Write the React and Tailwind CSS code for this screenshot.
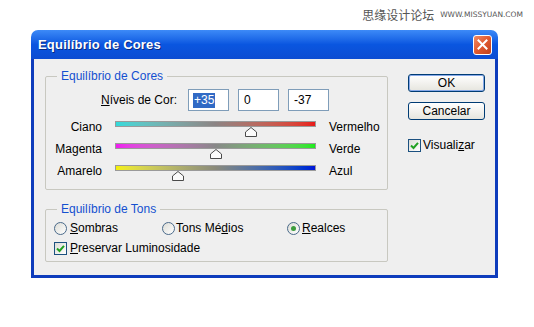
import React from 'react';

const font = { fontFamily: '"Liberation Sans", Arial, sans-serif' };

const sliders = [
  { left: 'Ciano', right: 'Vermelho', value: 35, bar: 'bg-gradient-to-r from-[#30dada] via-[#8c8484] to-[#e81818]' },
  { left: 'Magenta', right: 'Verde', value: 0, bar: 'bg-gradient-to-r from-[#f018f0] via-[#888888] to-[#18ec18]' },
  { left: 'Amarelo', right: 'Azul', value: -37, bar: 'bg-gradient-to-r from-[#f4f000] via-[#8a8a7a] to-[#0010d8]' },
];

function Thumb({ value }) {
  // valor -100..100 mapeado na barra de 201px
  const left = Math.round(((value + 100) / 200) * 201) - 7;
  return (
    <svg
      width="12"
      height="10"
      viewBox="0 0 12 10"
      className="absolute top-[5px]"
      style={{ left }}
    >
      <path d="M6 0.5 L11.5 5 L11.5 9.5 L0.5 9.5 L0.5 5 Z" fill="#fbfbfb" stroke="#4a4a4a" strokeWidth="1" />
    </svg>
  );
}

function CheckBox() {
  return (
    <span className="w-[13px] h-[13px] border border-[#1c5180] bg-gradient-to-br from-[#dcdcd6] to-white flex items-center justify-center shrink-0">
      <svg width="9" height="9" viewBox="0 0 9 9">
        <path d="M1 4.5 L3.5 7 L8 1.8" fill="none" stroke="#21a121" strokeWidth="2" />
      </svg>
    </span>
  );
}

function Radio({ checked }) {
  return (
    <span className="w-[13px] h-[13px] rounded-full border border-[#4a6a8a] bg-gradient-to-br from-[#dcdcd6] to-white flex items-center justify-center shrink-0">
      {checked && <span className="w-[5px] h-[5px] rounded-full bg-[#3c9c3c]" />}
    </span>
  );
}

function Button({ children, main }) {
  return (
    <button
      className={`w-[77px] h-[18px] rounded-[3px] border border-[#003c74] bg-gradient-to-b from-white to-[#e6e5de] text-[12px] leading-[14px] text-black flex items-center justify-center ${main ? 'shadow-[inset_0_0_0_1px_#86a8e8]' : ''}`}
    >
      {children}
    </button>
  );
}

export default function App() {
  return (
    <div className="w-[534px] h-[327px] bg-white overflow-hidden" style={font}>
      {/* marca d'agua */}
      <div className="h-[30px] flex items-center justify-end pr-[11px] gap-[6px]">
        <span className="text-[12px] text-[#555]" style={{ fontFamily: '"Noto Sans CJK SC", sans-serif' }}>
          思缘设计论坛
        </span>
        <span className="text-[7.5px] text-[#555]" style={{ fontFamily: '"DejaVu Sans", sans-serif' }}>
          WWW.MISSYUAN.COM
        </span>
      </div>

      <div className="ml-[31px] w-[467px]">
        {/* barra de titulo */}
        <div className="h-[29px] rounded-t-[7px] bg-gradient-to-b from-[#3d8af7] via-[#0a56e0] to-[#0c4cd2] flex items-center justify-between pl-[7px] pr-[6px]">
          <span className="text-[13px] font-bold text-white tracking-[0.2px]" style={{ textShadow: '1px 1px 0 #0a2a80' }}>
            Equilíbrio de Cores
          </span>
          <span className="w-[19px] h-[20px] rounded-[3px] border border-white bg-gradient-to-br from-[#f08a64] via-[#e0582e] to-[#c0401c] flex items-center justify-center">
            <svg width="11" height="11" viewBox="0 0 11 11">
              <path d="M1.5 1.5 L9.5 9.5 M9.5 1.5 L1.5 9.5" stroke="white" strokeWidth="2" strokeLinecap="square" />
            </svg>
          </span>
        </div>

        {/* corpo */}
        <div className="h-[219px] border-x-[3px] border-b-[3px] border-[#0e3cbc] bg-[#efefef] flex pl-[11px] text-[12px] text-black">
          <div className="w-[343px] pt-[10px] flex flex-col">
            <fieldset className="border border-[#c8c8c0] rounded-[2px] pb-[10px]">
              <legend className="ml-[11px] px-[4px] text-[#1450d0] leading-[14px]">Equilíbrio de Cores</legend>
              <div className="mt-[6px] flex items-center">
                <span className="w-[131px] text-right">
                  <span className="underline">N</span>íveis de Cor:
                </span>
                <div className="ml-[11px] flex gap-[9px]">
                  <div className="w-[41px] h-[22px] border border-[#7f9db9] bg-white flex items-center pl-[4px]">
                    <span className="bg-[#316ac5] text-white px-px leading-[15px]">+35</span>
                  </div>
                  <div className="w-[41px] h-[22px] border border-[#7f9db9] bg-white flex items-center pl-[5px]">0</div>
                  <div className="w-[41px] h-[22px] border border-[#7f9db9] bg-white flex items-center pl-[5px]">-37</div>
                </div>
              </div>
              <div className="mt-[2px]">
                {sliders.map((s) => (
                  <div key={s.left} className="h-[22px] flex items-center">
                    <span className="w-[56px] text-right mt-[5px]">{s.left}</span>
                    <div className={`relative ml-[13px] w-[201px] h-[6px] border border-[#9a9a9a] ${s.bar}`}>
                      <Thumb value={s.value} />
                    </div>
                    <span className="ml-[13px] mt-[5px]">{s.right}</span>
                  </div>
                ))}
              </div>
            </fieldset>

            <fieldset className="mt-[12px] border border-[#c8c8c0] rounded-[2px] pb-[4px]">
              <legend className="ml-[11px] px-[4px] text-[#1450d0] leading-[14px]">Equilíbrio de Tons</legend>
              <div className="mt-[3px] h-[18px] flex items-center pl-[8px]">
                <div className="w-[108px] flex items-center gap-[3px]">
                  <Radio />
                  <span><span className="underline">S</span>ombras</span>
                </div>
                <div className="w-[125px] flex items-center gap-[1px]">
                  <Radio />
                  <span>Tons Mé<span className="underline">d</span>ios</span>
                </div>
                <div className="flex items-center gap-[2px]">
                  <Radio checked />
                  <span><span className="underline">R</span>ealces</span>
                </div>
              </div>
              <div className="mt-[2px] h-[18px] flex items-center pl-[8px] gap-[3px]">
                <CheckBox />
                <span><span className="underline">P</span>reservar Luminosidade</span>
              </div>
            </fieldset>
          </div>

          <div className="ml-[20px] w-[77px] pt-[15px] flex flex-col">
            <Button main>OK</Button>
            <div className="mt-[10px]">
              <Button>Cancelar</Button>
            </div>
            <div className="mt-[16px] flex items-center gap-[2px]">
              <CheckBox />
              <span>Visuali<span className="underline">z</span>ar</span>
            </div>
          </div>
        </div>
      </div>
    </div>
  );
}
